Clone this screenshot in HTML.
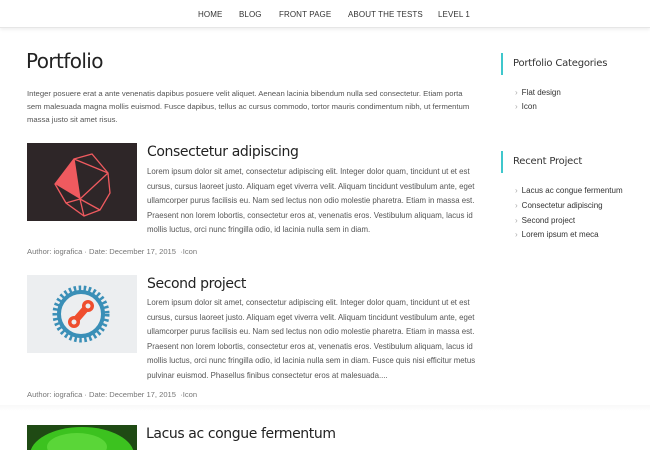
<!DOCTYPE html>
<html><head><meta charset="utf-8"><style>
*{margin:0;padding:0;box-sizing:border-box}
html,body{width:650px;height:450px;overflow:hidden}
body{background:#fff;font-family:"Liberation Sans",Arial,sans-serif;color:#444;position:relative}
.a{position:absolute;white-space:nowrap}
.nav{position:absolute;left:0;top:0;width:650px;height:28px;background:#fff;border-bottom:1px solid #e6e6e6;box-shadow:0 2px 3px rgba(0,0,0,0.06)}
.nav span{position:absolute;top:10px;font-size:8px;color:#333;letter-spacing:0.1px}
.h1{font-size:20px;color:#222;font-family:"DejaVu Sans","Liberation Sans",sans-serif;letter-spacing:-0.6px}
.h2{font-size:14px;color:#222;font-family:"DejaVu Sans","Liberation Sans",sans-serif;letter-spacing:-0.4px}
.p{font-size:7.85px;line-height:14.5px;color:#555}
.meta{font-size:7.6px;color:#777}
.sb{position:absolute;width:2px;height:22px;background:#3fc7cc}
.sh{font-size:10px;color:#333;font-family:"DejaVu Sans","Liberation Sans",sans-serif;letter-spacing:-0.2px}
.li{font-size:8px;color:#333}
.li b{font-weight:normal;color:#aaa;margin-right:4px}
</style></head><body>
<div class="nav">
<span style="left:198px">HOME</span><span style="left:239px">BLOG</span><span style="left:279px">FRONT PAGE</span><span style="left:348px">ABOUT THE TESTS</span><span style="left:438px">LEVEL 1</span>
</div>
<div class="a h1" style="left:26px;top:49px">Portfolio</div>
<div class="a p" style="left:27px;top:87px;line-height:13px;font-size:7.7px">Integer posuere erat a ante venenatis dapibus posuere velit aliquet. Aenean lacinia bibendum nulla sed consectetur. Etiam porta<br>sem malesuada magna mollis euismod. Fusce dapibus, tellus ac cursus commodo, tortor mauris condimentum nibh, ut fermentum<br>massa justo sit amet risus.</div>

<svg class="a" style="left:27px;top:143px" width="110" height="78" viewBox="0 0 110 78">
<rect width="110" height="78" fill="#2e2628"/>
<g stroke="#ef5a5f" stroke-width="1.3" fill="none">
<polygon points="47,16 65,11 81,30 83,50 73,67 57,73 39,60 28,41" />
<line x1="47" y1="16" x2="53" y2="56"/><line x1="53" y1="56" x2="81" y2="30"/><line x1="53" y1="56" x2="73" y2="67"/><line x1="53" y1="56" x2="39" y2="60"/><line x1="47" y1="16" x2="81" y2="30"/><line x1="53" y1="56" x2="57" y2="73"/>
</g>
<polygon points="47,16 53,56 28,41" fill="#ef5a5f"/>
</svg>
<div class="a h2" style="left:147px;top:144px">Consectetur adipiscing</div>
<div class="a p" style="left:147px;top:165px">Lorem ipsum dolor sit amet, consectetur adipiscing elit. Integer dolor quam, tincidunt ut et est<br>cursus, cursus laoreet justo. Aliquam eget viverra velit. Aliquam tincidunt vestibulum ante, eget<br>ullamcorper purus facilisis eu. Nam sed lectus non odio molestie pharetra. Etiam in massa est.<br>Praesent non lorem lobortis, consectetur eros at, venenatis eros. Vestibulum aliquam, lacus id<br>mollis luctus, orci nunc fringilla odio, id lacinia nulla sem in diam.</div>
<div class="a meta" style="left:27px;top:247px">Author: iografica · Date: December 17, 2015 &nbsp;·Icon</div>

<svg class="a" style="left:27px;top:275px" width="110" height="78" viewBox="0 0 110 78">
<rect width="110" height="78" fill="#eceef0"/>
<circle cx="54" cy="39" r="26" fill="none" stroke="#3a8fb7" stroke-width="5" stroke-dasharray="2.5 2.5"/>
<circle cx="54" cy="39" r="22" fill="none" stroke="#3a8fb7" stroke-width="4"/>
<g stroke="#ef4e2e" stroke-width="7" stroke-linecap="round"><line x1="47" y1="47" x2="61" y2="31"/></g>
<circle cx="47" cy="47" r="6" fill="#ef4e2e"/><circle cx="61" cy="31" r="6" fill="#ef4e2e"/>
<circle cx="47" cy="47" r="2.5" fill="#eceef0"/><circle cx="61" cy="31" r="2.5" fill="#eceef0"/>
</svg>
<div class="a h2" style="left:147px;top:276px">Second project</div>
<div class="a p" style="left:147px;top:296px">Lorem ipsum dolor sit amet, consectetur adipiscing elit. Integer dolor quam, tincidunt ut et est<br>cursus, cursus laoreet justo. Aliquam eget viverra velit. Aliquam tincidunt vestibulum ante, eget<br>ullamcorper purus facilisis eu. Nam sed lectus non odio molestie pharetra. Etiam in massa est.<br>Praesent non lorem lobortis, consectetur eros at, venenatis eros. Vestibulum aliquam, lacus id<br>mollis luctus, orci nunc fringilla odio, id lacinia nulla sem in diam. Fusce quis nisi efficitur metus<br>pulvinar euismod. Phasellus finibus consectetur eros at malesuada....</div>
<div class="a meta" style="left:27px;top:390px">Author: iografica · Date: December 17, 2015 &nbsp;·Icon</div>
<div class="a" style="left:0;top:405px;width:650px;height:6px;background:linear-gradient(#f8f8f8,#fff)"></div>

<svg class="a" style="left:27px;top:425px" width="110" height="25" viewBox="0 0 110 25">
<rect width="110" height="25" fill="#1f4a14"/>
<ellipse cx="55" cy="30" rx="52" ry="28" fill="#3cc21f"/>
<ellipse cx="50" cy="22" rx="30" ry="14" fill="#5ad638"/>
</svg>
<div class="a h2" style="left:146px;top:426px">Lacus ac congue fermentum</div>

<div class="sb" style="left:501px;top:53px"></div>
<div class="a sh" style="left:513px;top:58px">Portfolio Categories</div>
<div class="a li" style="left:515px;top:88px"><b>›</b>Flat design</div>
<div class="a li" style="left:515px;top:102px"><b>›</b>Icon</div>
<div class="sb" style="left:501px;top:151px"></div>
<div class="a sh" style="left:513px;top:156px">Recent Project</div>
<div class="a li" style="left:515px;top:186px"><b>›</b>Lacus ac congue fermentum</div>
<div class="a li" style="left:515px;top:201px"><b>›</b>Consectetur adipiscing</div>
<div class="a li" style="left:515px;top:216px"><b>›</b>Second project</div>
<div class="a li" style="left:515px;top:230px"><b>›</b>Lorem ipsum et meca</div>
</body></html>
